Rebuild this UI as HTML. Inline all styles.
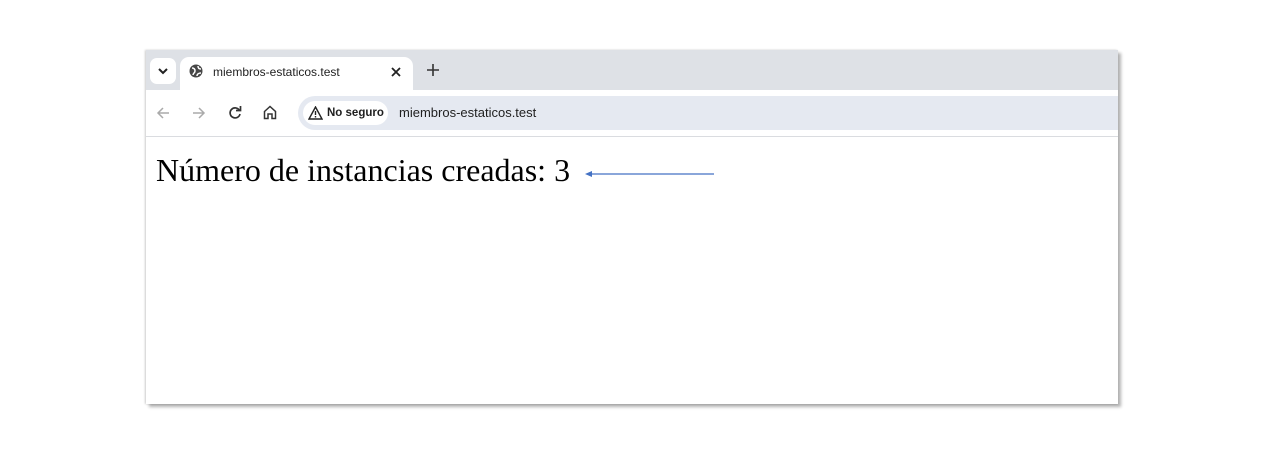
<!DOCTYPE html><html><head><style>
body{margin:0;width:1280px;height:454px;background:#fff;position:relative;font-family:"Liberation Sans",sans-serif;overflow:hidden}
.win{position:absolute;left:146px;top:50px;width:972px;height:354px;background:#fff;overflow:hidden;box-shadow:3px 3px 3px rgba(0,0,0,.3),-1px 0 2px rgba(0,0,0,.2)}
.wrap{position:absolute;left:146px;top:50px;width:972px;height:354px;box-shadow:3px 3px 3px rgba(0,0,0,.3),-1px 0 2px rgba(0,0,0,.2)}
.tabs{position:absolute;left:0;top:0;width:972px;height:40px;background:#dee1e6}
.dd{position:absolute;left:4px;top:8px;width:26px;height:26px;background:#fff;border-radius:7px}
.tab{position:absolute;left:34px;top:7px;width:233px;height:33px;background:#fff;border-radius:9px 9px 0 0}
.tb{position:absolute;top:40px;left:0;width:972px;height:46px;background:#fff;border-bottom:1px solid #dadce0}
.addr{position:absolute;left:152px;top:6px;width:840px;height:34px;background:#e5e9f1;border-radius:17px 0 0 17px}
.chip{position:absolute;left:5px;top:5px;width:85px;height:24px;background:#fff;border-radius:12px;font-size:11.5px;font-weight:bold;color:#1f1f1f;line-height:24px}
.t{position:absolute;font-size:12px;color:#1f1f1f}
</style></head><body>
<div class="win">
<div class="tabs">
<div class="dd"><svg width="26" height="26"><path d="M9 11l4 4 4-4" stroke="#222" stroke-width="2" fill="none"/></svg></div>
<div class="tab">
<svg style="position:absolute;left:9px;top:7px" width="14" height="14"><circle cx="7" cy="7" r="6.5" fill="#474747"/><path d="M3 4c2 0 3 1 3 3s-2 2-2 4M9 2c0 2 1 3 3 3M8 12c0-2 2-3 4-3" stroke="#fff" stroke-width="1.5" fill="none"/></svg>
<span class="t" style="left:33px;top:8px">miembros-estaticos.test</span>
<svg style="position:absolute;left:211px;top:10px" width="10" height="10"><path d="M1 1l8 8M9 1l-8 8" stroke="#222" stroke-width="1.8"/></svg>
</div>
<svg style="position:absolute;left:281px;top:14px" width="12" height="12"><path d="M6 0v12M0 6h12" stroke="#333" stroke-width="1.6"/></svg>
</div>
<div class="tb">
<svg style="position:absolute;left:10px;top:16px" width="14" height="14"><path d="M13 7H2M7 2L2 7l5 5" stroke="#aaa" stroke-width="1.5" fill="none"/></svg>
<svg style="position:absolute;left:46px;top:16px" width="14" height="14"><path d="M1 7h11M7 2l5 5-5 5" stroke="#aaa" stroke-width="1.5" fill="none"/></svg>
<svg style="position:absolute;left:82px;top:16px" width="14" height="14"><path d="M11.5 4.5A5 5 0 1 0 12 8" stroke="#333" stroke-width="1.7" fill="none"/><path d="M8 4.5h4.5V0" stroke="#333" stroke-width="1.7" fill="none"/></svg>
<svg style="position:absolute;left:117px;top:15px" width="14" height="15"><path d="M1.5 6.5L7 1.5l5.5 5V13.5H9V9H5v4.5H1.5z" stroke="#333" stroke-width="1.5" fill="none"/></svg>
<div class="addr">
<div class="chip"><svg style="position:absolute;left:5px;top:5px" width="15" height="14"><path d="M7.5 1L14 13H1z" stroke="#222" stroke-width="1.4" fill="none"/><path d="M7.5 5v4M7.5 10v1.5" stroke="#222" stroke-width="1.4"/></svg><span style="position:absolute;left:24px">No seguro</span></div>
<span class="t" style="left:101px;top:9px;font-size:13px">miembros-estaticos.test</span>
</div>
</div>
<div style="position:absolute;left:10px;top:102px;font-family:'Liberation Serif',serif;font-size:32px;color:#000;white-space:nowrap">Número de instancias creadas: 3</div>
<svg style="position:absolute;left:438px;top:119px" width="132" height="10"><path d="M4 5H130" stroke="#4472c4" stroke-width="1.2"/><path d="M1 5l7-3v6z" fill="#4472c4"/></svg>
</div>
</body></html>
